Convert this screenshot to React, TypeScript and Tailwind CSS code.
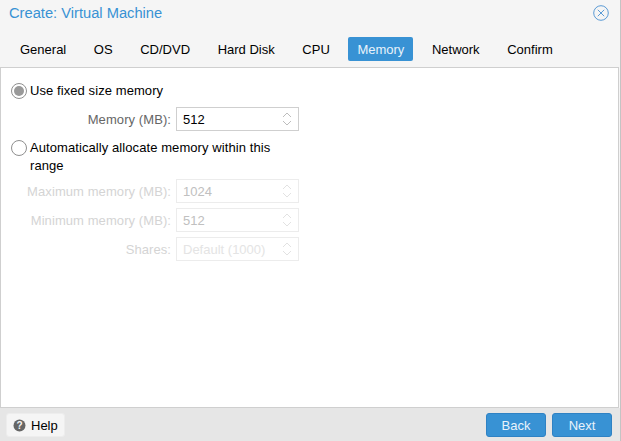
import React from "react";

function Spinner({ disabled }: { disabled?: boolean }) {
  const c = disabled ? "#e2e2e2" : "#bdbdbd";
  return (
    <svg width="14" height="18" viewBox="0 0 14 18" fill="none" className="shrink-0">
      <path d="M3 7 L7 3 L11 7" stroke={c} strokeWidth="1" />
      <path d="M3 11 L7 15 L11 11" stroke={c} strokeWidth="1" />
    </svg>
  );
}

function Field({ label, value, disabled }: { label: string; value: string; disabled?: boolean }) {
  return (
    <div className="flex items-center h-6 mb-[5px]">
      <div className={`w-[165px] text-right pr-[5px] tracking-[0.08px] ${disabled ? "text-[#d4d4d4]" : "text-[#666666]"}`}>{label}</div>
      <div className={`w-[123px] h-6 flex items-center justify-between pl-[6px] pr-[4px] border ${disabled ? "border-[#ececec]" : "border-[#cfcfcf]"}`}>
        <span className={disabled ? (label === "Shares:" ? "text-[#e4e4e4]" : "text-[#c0c0c0]") : "text-black"}>{value}</span>
        <Spinner disabled={disabled} />
      </div>
    </div>
  );
}

function Radio({ checked }: { checked?: boolean }) {
  return (
    <div className="w-4 h-4 rounded-full border border-[#8f8f8f] bg-white flex items-center justify-center shrink-0">
      {checked && <div className="w-[10px] h-[10px] rounded-full bg-[#999999]" />}
    </div>
  );
}

export default function App() {
  const tabs = ["General", "OS", "CD/DVD", "Hard Disk", "CPU", "Memory", "Network", "Confirm"];
  return (
    <div className="w-[621px] h-[441px] flex flex-col bg-[#f5f5f5] text-[13px] leading-[17px] overflow-hidden border-r border-[#c4c4c4]" style={{ fontFamily: '"Liberation Sans", Arial, sans-serif' }}>
      <div className="h-[30px] shrink-0 flex items-center justify-between pl-[9px] pr-[11px]">
        <span className="text-[14.7px] text-[#3892d4] mt-[-3px]">Create: Virtual Machine</span>
        <svg width="16" height="16" viewBox="0 0 16 16" fill="none" stroke="#5b9bd5" className="mt-[-4px]">
          <circle cx="8" cy="8" r="7.3" />
          <path d="M4.8 4.8 L11.2 11.2 M11.2 4.8 L4.8 11.2" />
        </svg>
      </div>
      <div className="h-[37px] shrink-0 flex items-start gap-[9.6px] pl-[11px]">
        {tabs.map((t) => (
          <div key={t} className={`h-6 mt-[7px] px-[9px] flex items-center rounded-[2px] ${t === "Memory" ? "bg-[#3892d4] text-[#e8f2fb]" : "text-black"}`}>{t}</div>
        ))}
      </div>
      <div className="flex-1 bg-white border border-[#cfcfcf] mr-[1px] pl-[10px] pt-[14px]">
        <div className="flex items-center gap-[3px] h-[17px] mb-[8px] text-black tracking-[0.08px]"><Radio checked />Use fixed size memory</div>
        <Field label="Memory (MB):" value="512" />
        <div className="flex gap-[3px] w-[270px] text-black mt-[8px] mb-[4px] leading-[18px] tracking-[0.08px]">
          <div className="pt-[1px]"><Radio /></div>
          <div>Automatically allocate memory within this range</div>
        </div>
        <Field label="Maximum memory (MB):" value="1024" disabled />
        <Field label="Minimum memory (MB):" value="512" disabled />
        <Field label="Shares:" value="Default (1000)" disabled />
      </div>
      <div className="h-[33px] shrink-0 bg-[#e6e6e6] flex items-center justify-between pl-[6px] pr-[8px] pt-[1px]">
        <button className="h-6 w-[59px] flex items-center gap-[5px] pl-[6px] rounded-[3px] border border-[#ededed] bg-[#f5f5f5] text-black">
          <svg width="13" height="13" viewBox="0 0 13 13" className="shrink-0">
            <circle cx="6.5" cy="6.5" r="6" fill="#666666" />
            <text x="6.5" y="10.2" textAnchor="middle" fontSize="10" fontWeight="700" fill="#f5f5f5" fontFamily="Liberation Sans">?</text>
          </svg>
          Help
        </button>
        <div className="flex gap-[6px]">
          <button className="h-6 w-[60px] rounded-[3px] border border-[#2f82c4] bg-[#3892d4] text-[#e8f2fb]">Back</button>
          <button className="h-6 w-[60px] rounded-[3px] border border-[#2f82c4] bg-[#3892d4] text-[#e8f2fb]">Next</button>
        </div>
      </div>
    </div>
  );
}
